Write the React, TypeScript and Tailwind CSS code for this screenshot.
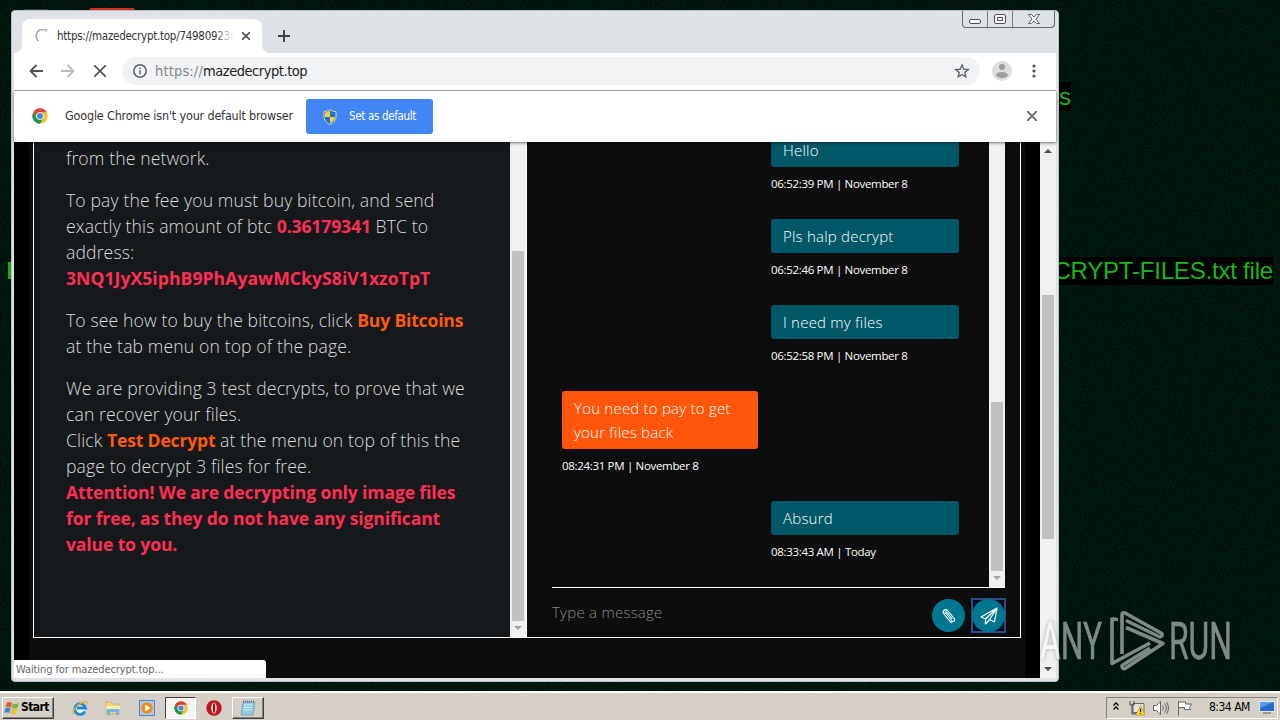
import type { ReactNode } from "react";
import clsx from "clsx";

const ui = "font-['DejaVu_Sans_Condensed','Open_Sans',sans-serif]";
const body = "font-['Open_Sans','Noto_Sans',sans-serif]";

const messages = [
  { text: ["Hello"], time: "06:52:39 PM | November 8", mine: true },
  { text: ["Pls halp decrypt"], time: "06:52:46 PM | November 8", mine: true },
  { text: ["I need my files"], time: "06:52:58 PM | November 8", mine: true },
  { text: ["You need to pay to get", "your files back"], time: "08:24:31 PM | November 8", mine: false },
  { text: ["Absurd"], time: "08:33:43 AM | Today", mine: true },
];

function Red({ children }: { children: ReactNode }) {
  return <b className="font-bold tracking-[-0.15px] text-[#ff2e55]">{children}</b>;
}

function Orange({ children }: { children: ReactNode }) {
  return <b className="font-bold tracking-[-0.2px] text-[#ff5a0c]">{children}</b>;
}

function Arrow({ up, className }: { up?: boolean; className: string }) {
  return (
    <svg viewBox="0 0 8 4" className={clsx("h-1 w-2 shrink-0", className)} fill="currentColor">
      <path d={up ? "M0 4 4 0 8 4z" : "M0 0 4 4 8 0z"} />
    </svg>
  );
}

function ChromeLogo({ className }: { className: string }) {
  return (
    <svg viewBox="0 0 48 48" className={className}>
      <circle cx="24" cy="24" r="23" fill="#fbc02d" />
      <path d="M4.1 12.5A23 23 0 0 1 43.9 12.5H24A11.500 11.500 0 0 0 14 29.800z" fill="#db4437" />
      <path d="M4.100 12.500 14 29.700A11.500 11.500 0 0 0 34 29.700L24 47A23 23 0 0 1 4.100 12.500z" fill="#0f9d58" />
      <circle cx="24" cy="24" r="11.500" fill="#f4f4f4" />
      <circle cx="24" cy="24" r="8.800" fill="#4285f4" />
    </svg>
  );
}

function Shield() {
  return (
    <svg viewBox="0 0 14 16" className="h-4 w-3.5">
      <path d="M7 .6C5 2 3 2.600 1 2.600V7c0 4 2.500 7 6 8.500C10.500 14 13 11 13 7V2.600C11 2.600 9 2 7 .6z" fill="#2a6fc9" stroke="#d8d8b8" />
      <path d="M7 1.500v6.500H2V3.400C4 3.300 5.500 2.600 7 1.500zM12 8H7v6.500C10 13 11.700 11 12 8z" fill="#f8d23c" />
    </svg>
  );
}

function TabStrip() {
  return (
    <div className="flex h-[42px] shrink-0 items-start bg-[#dee1e6]">
      <div className="relative mt-2 ml-2 flex h-[34px] w-[240px] items-center rounded-t-lg bg-white pl-[13px]">
        <svg viewBox="0 0 8 8" className="absolute bottom-0 -left-2 size-2" fill="#fff"><path d="M8 0v8H0a8 8 0 0 0 8-8z" /></svg>
        <svg viewBox="0 0 8 8" className="absolute -right-2 bottom-0 size-2" fill="#fff"><path d="M0 0v8h8a8 8 0 0 1-8-8z" /></svg>
        <svg viewBox="0 0 14 14" className="size-3.5" fill="none" stroke="#aaa" strokeWidth="1.800">
          <path d="M12 2A6.200 6.200 0 1 0 3.500 12" />
        </svg>
        <p className="relative ml-2 h-4 w-[177px] overflow-hidden text-[11.500px] leading-4 tracking-[-0.26px] whitespace-nowrap text-[#333]">
          https://mazedecrypt.top/74980923c
          <span className="absolute inset-y-0 right-0 w-5 bg-linear-to-r from-transparent to-white" />
        </p>
        <svg viewBox="0 0 8 8" className="ml-2 size-2" stroke="#4a4d51" strokeWidth="1.600"><path d="m0 0 8 8M8 0 0 8" /></svg>
      </div>
      <svg viewBox="0 0 12 12" className="mt-[19px] ml-4 size-3" stroke="#3c4043" strokeWidth="1.900"><path d="M6 0v12M0 6h12" /></svg>
      <div className="mr-px ml-auto flex h-[17px] rounded-b border border-t-0 border-[#666a72] text-[#4d5056]">
        <div className="flex w-[25px] items-center justify-center border-r border-[#777b82] pt-1">
          <span className="h-[5px] w-3 rounded-[2px] border border-[#4d5056] bg-white" />
        </div>
        <div className="flex w-[25px] items-center justify-center border-r border-[#777b82]">
          <span className="flex h-[10px] w-3 items-center justify-center rounded-[2px] border border-[#4d5056] bg-white">
            <span className="h-1 w-1.5 border border-[#4d5056]" />
          </span>
        </div>
        <div className="flex w-[41px] items-center justify-center">
          <svg viewBox="0 0 12 10" className="h-2.5 w-3">
            <path d="M.5.5h3L6 3 8.500.5h3L8 5l3.500 4.500h-3L6 7 3.500 9.500h-3L4 5z" fill="#fff" stroke="#4d5056" strokeWidth=".9" />
          </svg>
        </div>
      </div>
    </div>
  );
}

function Toolbar() {
  return (
    <div className="flex h-[38px] shrink-0 items-center border-b border-[#b0b0b0] bg-white pb-px text-[#5f6368]">
      <svg viewBox="0 0 14 14" className="ml-[15px] size-3.5" fill="none" stroke="#50545a" strokeWidth="1.800"><path d="M14 7H1.500M7.500 1l-6 6 6 6" /></svg>
      <svg viewBox="0 0 14 14" className="ml-[18px] size-3.5" fill="none" stroke="#bbb" strokeWidth="1.800"><path d="M0 7h12.500M6.500 1l6 6-6 6" /></svg>
      <svg viewBox="0 0 12 12" className="ml-[19px] size-3" fill="none" stroke="#50545a" strokeWidth="1.700"><path d="m0 0 12 12M12 0 0 12" /></svg>
      <div className="ml-4 flex h-7 w-[858px] items-center rounded-full bg-[#f1f3f4]">
        <svg viewBox="0 0 14 14" className="ml-[11px] size-3.5" fill="none" stroke="#5f6368" strokeWidth="1.500">
          <circle cx="7" cy="7" r="6.200" />
          <path d="M7 6.200v4M7 3.500v1.500" />
        </svg>
        <span className="mt-0.5 ml-2 text-[14.500px] tracking-[-0.46px] text-[#222]">
          <span className="tracking-[0.15px] text-[#85888c]">https://</span>mazedecrypt.top
        </span>
        <svg viewBox="0 0 16 16" className="mr-2.5 ml-auto size-4" fill="none" stroke="#5f6368" strokeWidth="1.400">
          <path d="m8 2 1.700 4.100 4.500.4-3.400 2.900 1 4.400L8 11.500l-3.800 2.300 1-4.400L1.800 6.500l4.500-.4z" />
        </svg>
      </div>
      <svg viewBox="0 0 20 20" className="ml-3 size-5" fill="#9e9e9e">
        <circle cx="10" cy="10" r="10" fill="#dedede" />
        <circle cx="10" cy="6" r="3" />
        <ellipse cx="10" cy="14" rx="6" ry="3" />
      </svg>
      <svg viewBox="0 0 4 14" className="ml-5 h-3.5 w-1" fill="#50545a">
        <circle cx="2" cy="2" r="1.600" /><circle cx="2" cy="7" r="1.600" /><circle cx="2" cy="12" r="1.600" />
      </svg>
    </div>
  );
}

function InfoBar() {
  return (
    <div className="relative z-10 flex h-[51px] shrink-0 items-center bg-white pl-[18px] shadow-[0_1px_3px_#0008]">
      <ChromeLogo className="mb-0.5 size-4" />
      <span className="ml-[17px] w-[241px] text-[12.500px] tracking-[-0.18px] whitespace-nowrap text-[#333]">
        Google Chrome isn't your default browser
      </span>
      <button className="flex h-[35px] w-[127px] items-center rounded-[3px] bg-[#4285f4] pl-[17px] text-[11.500px] text-white">
        <Shield />
        <span className="ml-3 tracking-[-0.34px] whitespace-nowrap">Set as default</span>
      </button>
      <svg viewBox="0 0 10 10" className="mr-[19px] mb-0.5 ml-auto size-2.5" stroke="#666" strokeWidth="1.800"><path d="m0 0 10 10M10 0 0 10" /></svg>
    </div>
  );
}

function Instructions() {
  return (
    <div className="h-full w-[476px] overflow-hidden bg-[#16191b] pt-[3px] pl-8 text-[17.600px] leading-[26px] font-light tracking-[0.12px] whitespace-nowrap text-[#dcdcdc]">
      <p className="mb-4">from the network.</p>
      <p className="mb-4">
        To pay the fee you must buy bitcoin, and send
        <br />
        exactly this amount of btc <Red>0.36179341</Red> BTC to
        <br />
        address:
        <br />
        <b className="font-bold tracking-[0.04px] text-[#ff2e55]">3NQ1JyX5iphB9PhAyawMCkyS8iV1xzoTpT</b>
      </p>
      <p className="mb-4">
        To see how to buy the bitcoins, click <Orange>Buy Bitcoins</Orange>
        <br />
        at the tab menu on top of the page.
      </p>
      <p>
        We are providing 3 test decrypts, to prove that we
        <br />
        can recover your files.
        <br />
        Click <Orange>Test Decrypt</Orange> at the menu on top of this the
        <br />
        page to decrypt 3 files for free.
        <br />
        <Red>Attention! We are decrypting only image files</Red>
        <br />
        <Red>for free, as they do not have any significant</Red>
        <br />
        <Red>value to you.</Red>
      </p>
    </div>
  );
}

function Chat() {
  return (
    <div className="flex h-full w-[494px] flex-col border-l border-white pl-[25px]">
      <div className="flex h-[446px] w-[453px] border-b border-white">
        <div className="-mt-[9px] flex w-[437px] flex-col pl-2.5">
          {messages.map((m) => (
            <div key={m.time} className={clsx("mb-[25px]", m.mine ? "ml-[209px] w-[188px]" : "w-[196px]")}>
              <div
                className={clsx(
                  "rounded-[3px] px-3 py-[5px] text-[15px] leading-6 font-light tracking-[0.22px] whitespace-nowrap text-white",
                  m.mine ? "bg-[#005768]" : "bg-[#ff560b]",
                )}
              >
                {m.text.map((line) => (
                  <p key={line}>{line}</p>
                ))}
              </div>
              <p className="mt-2 h-[19px] text-[11.500px] leading-[18px] tracking-[-0.32px] whitespace-nowrap text-white">{m.time}</p>
            </div>
          ))}
        </div>
        <div className="flex w-4 flex-col items-center bg-[#f1f1f1] pt-[260px]">
          <div className="h-[169px] w-3 bg-[#c1c1c1]" />
          <Arrow className="mt-[5px] text-[#a3a3a3]" />
        </div>
      </div>
      <div className="flex h-[49px] w-[454px] items-center pt-1.5">
        <span className="mb-1.5 text-[15px] font-light tracking-[0.25px] text-[#8a8a8a]">Type a message</span>
        <button className="ml-auto flex size-[33px] items-center justify-center rounded-full bg-[#007791]">
          <svg viewBox="0 0 16 16" className="size-4" fill="none" stroke="#fff" strokeWidth="1.100" strokeLinecap="round">
            <path d="m5 5.500 6 7.500c1.200 1.200 3.600-.5 2.500-2.300L6.500 2.500C4.500.3.800 3 2.500 5.500l5.800 7.200c1 1.200 1.600 1.800 2.700 2" />
            <path d="m11 10.500-5.500-6.500c-1.300-.6-2 .4-1.300 1.500" />
          </svg>
        </button>
        <button className="ml-1.5 flex size-[35px] items-center justify-center border-2 border-[#344a86] bg-[#030b25]">
          <span className="flex size-[33px] shrink-0 items-center justify-center rounded-full bg-[#007791]">
            <svg viewBox="0 0 18 18" className="size-[18px]" fill="none" stroke="#fff" strokeWidth="1.200" strokeLinejoin="round">
              <path d="M17 1 1 10l4.500 2L17 1l-2.500 14-5-2.500M5.500 12v5l4-4.500L17 1" />
            </svg>
          </span>
        </button>
      </div>
    </div>
  );
}

function Page() {
  return (
    <div className="flex min-h-0 flex-1 bg-black pl-[15px]">
      <div className="w-[996px] bg-[#0d0d0d] pl-1">
        <div className="flex h-[496px] w-[988px] border border-t-0 border-white">
          <Instructions />
          <div className="flex w-4 shrink-0 flex-col items-center bg-[#f1f1f1] pt-[109px]">
            <div className="h-[370px] w-3 bg-[#c1c1c1]" />
            <Arrow className="mt-[5px] text-[#a3a3a3]" />
          </div>
          <Chat />
        </div>
      </div>
      <div className="ml-[15px] flex w-4 flex-col items-center bg-[#f1f1f1] pt-[7px]">
        <Arrow up className="text-[#505050]" />
        <div className="mt-[142px] h-[244px] w-3 bg-[#c1c1c1]" />
        <Arrow className="mt-auto mb-[7px] text-[#505050]" />
      </div>
    </div>
  );
}

function Watermark() {
  return (
    <svg viewBox="0 0 220 64" className="absolute top-[608px] left-[1036px] h-16 w-[220px] overflow-visible opacity-50 drop-shadow-[0_0_2px_#0009]">
      <g fill="#f8fcfa" stroke="#f8fcfa" strokeWidth=".5" fontFamily="Roboto, sans-serif" fontSize="51" fontWeight="400">
        <text x="4" y="51" textLength="62" lengthAdjust="spacingAndGlyphs">ANY</text>
        <text x="133" y="51" textLength="63" lengthAdjust="spacingAndGlyphs">RUN</text>
      </g>
      <g fill="none" stroke="#f8fcfa" strokeWidth="3.600" strokeLinejoin="round">
        <path d="M82 11.500 76 11v44.500L114 35" />
        <path d="M86 46V7q0-3 3-2l36 20q3 2-1 4L90 12.500" />
        <path d="m90 19.500 37 16L89 60.500q-3 1-3-3L114 40" />
      </g>
    </svg>
  );
}

function Taskbar() {
  return (
    <div className="absolute inset-x-0 bottom-0 flex h-[29px] items-center border-t-2 border-white bg-[#d5cfc8] pt-0.5 text-black">
      <button className="ml-0.5 flex h-[22px] w-[52px] items-center border border-t-white border-r-[#404040] border-b-[#404040] border-l-white pl-px shadow-[inset_-1px_-1px_#808080]">
        <svg viewBox="0 0 16 16" className="size-4 shrink-0">
          <path d="M3 2.500C5 1.500 6.500 2 8 3L6.700 7.500C5 6.500 3.500 6.500 1.700 7.300z" fill="#e8542c" />
          <path d="M8.800 3.300c2 1 4 1 6 0L13.500 8c-2 1-4 .8-6-.2z" fill="#7db83c" />
          <path d="M1.500 8.200c2-1 3.500-.8 5 .2L5.200 13C3.500 12 2 12 .2 12.800z" fill="#3a86d6" />
          <path d="M7.300 8.800c2 1 4 1 6 .1L12 13.500c-2 1-4 .8-6-.2z" fill="#f4bd2c" />
        </svg>
        <b className="mb-0.5 ml-px text-[12px] tracking-[-0.6px]">Start</b>
      </button>
      <svg viewBox="0 0 16 16" className="ml-[18px] size-4" fill="none">
        <circle cx="8" cy="8.500" r="5" fill="#e6f3fc" />
        <path d="M13 11.500A5.400 5.400 0 1 1 13.500 8H5" stroke="#2387d8" strokeWidth="2.800" />
        <path d="M1 14.500C0 11 7 2 14 1.500q2 .5.500 3" stroke="#e4b52c" strokeWidth="1.300" />
      </svg>
      <svg viewBox="0 0 16 16" className="ml-[17px] size-4">
        <path d="M1 2h5l1 2h7v10H1z" fill="#f2d873" stroke="#c9a94c" strokeWidth=".7" />
        <path d="M1 6h14v3H1z" fill="#f8eab0" />
        <path d="M2 15V9h12v6h-3v-3H5v3z" fill="#73b7e4" />
      </svg>
      <svg viewBox="0 0 16 16" className="ml-[18px] size-4">
        <path d="M.5.500h15v15H.5z" fill="#a9cbed" stroke="#4d88c4" />
        <circle cx="8" cy="8" r="5.800" fill="#f38a14" />
        <path d="M6.200 4.500v7L11.500 8z" fill="#fff" />
      </svg>
      <div className="ml-2.5 flex h-[22px] w-[31px] items-center justify-center border border-t-[#404040] border-r-white border-b-white border-l-[#404040] bg-[#f7f5f3]">
        <ChromeLogo className="size-3.5" />
      </div>
      <svg viewBox="0 0 16 16" className="ml-2.5 size-4">
        <circle cx="8" cy="8" r="7.700" fill="#c4161c" />
        <ellipse cx="8" cy="8" rx="2.700" ry="5.600" fill="#f4e6e4" />
        <ellipse cx="8" cy="8" rx="1.100" ry="5" fill="#8e1014" />
      </svg>
      <div className="ml-2.5 flex h-[22px] w-8 items-center justify-center border border-t-white border-r-[#404040] border-b-[#404040] border-l-white shadow-[inset_-1px_-1px_#808080]">
        <svg viewBox="0 0 16 16" className="size-4">
          <path d="M3 2h12l-2 13H1z" fill="#91cce4" stroke="#5d9ab4" strokeWidth=".7" />
          <path d="M4 5h8.500M3.700 7.500h8.500M3.300 10h8.500" stroke="#d4eef8" />
          <path d="M3 1.500h12" stroke="#666" strokeWidth="1.500" strokeDasharray="1 1" />
        </svg>
      </div>
      <div className="mr-0.5 ml-auto flex h-[22px] w-[172px] items-center border border-t-[#808080] border-r-white border-b-white border-l-[#808080]">
        <svg viewBox="0 0 6 8" className="mb-1 ml-1.5 h-2 w-1.5" fill="none" stroke="#000" strokeWidth="1.300"><path d="m.5 3.500 2.500-2.500 2.500 2.500M.5 7.500 3 5l2.500 2.500" /></svg>
        <svg viewBox="0 0 16 16" className="ml-2.5 size-4">
          <path d="M4 3.500h11v9H4z" fill="#e2e2e2" stroke="#666" />
          <path d="M1 1v4h4V1M3 5v9h4" fill="none" stroke="#444" />
          <path d="m11.500 5.500 4.500 9.500H7z" fill="#ffd922" stroke="#b89310" strokeWidth=".6" />
          <path d="M11.500 8.500v3.500m0 1v1" stroke="#222" strokeWidth="1.200" />
        </svg>
        <svg viewBox="0 0 16 16" className="ml-2 size-4" fill="#fff" stroke="#666" strokeWidth="1">
          <path d="M.5 5.500h3L7.500 1.500v13l-4-4h-3z" />
          <path d="M9.500 5.500q2 2.500 0 5M11.500 3.500q4 4.500 0 9M13.500 2q4 6 0 12" fill="none" />
        </svg>
        <svg viewBox="0 0 16 16" className="ml-2 size-4" fill="#fff" stroke="#666" strokeWidth="1">
          <path d="M1.500 1v14.500M1.500 2h7v2h6l-2 3.500 1 2h-6v-2h-6z" />
        </svg>
        <span className="mb-0.5 ml-4 text-[12px] tracking-[-0.5px] whitespace-nowrap">8:34 AM</span>
        <svg viewBox="0 0 16 13" className="mr-0.5 ml-auto h-[13px] w-4">
          <path d="M.5.500h15v10H.5z" fill="#2b6cc8" stroke="#e0e6ee" />
          <path d="M1 1h14L1 7z" fill="#5a98e8" />
          <path d="M4 12h8" stroke="#888" strokeWidth="1.500" />
        </svg>
      </div>
    </div>
  );
}

export default function App() {
  return (
    <main className={clsx("relative h-[720px] w-[1280px] overflow-hidden bg-[#000c06]", ui)}>
      {/* wallpaper grain */}
      <svg className="absolute inset-0 size-full opacity-10">
        <filter id="grain">
          <feTurbulence type="fractalNoise" baseFrequency="0.7" numOctaves="2" seed="4" />
          <feColorMatrix values="0 0 0 0 0  1 0 0 0 -0.3  0.5 0 0 0 -0.15  0 0 0 0 1" />
        </filter>
        <rect width="1280" height="720" filter="url(#grain)" />
      </svg>
      <div className="absolute top-[8px] left-[90px] h-2 w-[44px] bg-[#d52b1e]" />
      <div className="absolute top-[9px] left-[24px] h-2 w-6 bg-[#3a3f3c]" />
      <div className="absolute top-[262px] left-[8px] h-[17px] w-1 bg-[#1fa51f]" />
      <div className="absolute top-[82px] right-[209px] bg-black font-['Liberation_Sans',sans-serif] text-[24px] leading-[29px] text-[#18b818]">
        s
      </div>
      <div className="absolute top-[257px] right-[7px] bg-black font-['Liberation_Sans',sans-serif] text-[24px] leading-[28px] tracking-[-0.2px] whitespace-nowrap text-[#18b818]">
        DECRYPT-FILES.txt file
      </div>

      <div className="absolute top-2.5 left-[11px] flex h-[672px] w-[1048px] flex-col overflow-hidden rounded-[4px] border border-[#b9bfc6] bg-[#dfe3e7] px-0.5 pb-[3px]">
        <TabStrip />
        <Toolbar />
        <InfoBar />
        <div className={clsx("flex min-h-0 flex-1", body)}>
          <Page />
        </div>
        <div className="absolute bottom-[3px] left-0.5 h-[18px] w-[252px] rounded-tr-[3px] bg-white pt-px pl-0.5 text-[11px] leading-[17px] tracking-[-0.1px] text-[#666]">
          Waiting for mazedecrypt.top...
        </div>
      </div>

      <Watermark />
      <Taskbar />
    </main>
  );
}
